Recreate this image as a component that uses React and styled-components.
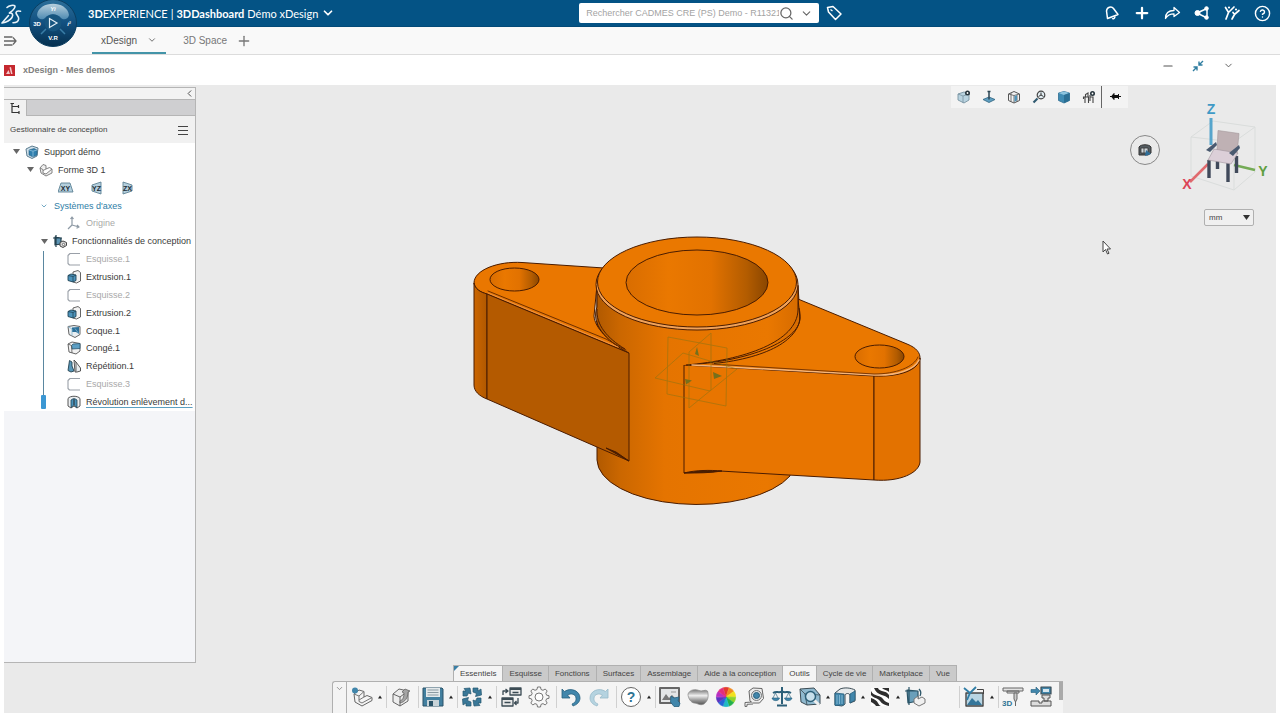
import { useState } from 'react'
import styled, { createGlobalStyle } from 'styled-components'
import { ChevronDown, ChevronLeft, CircleHelp, Minus, Plus, Search } from 'lucide-react'

const GlobalStyle = createGlobalStyle`
  * {
    box-sizing: border-box;
  }
  body {
    margin: 0;
    background: #fff;
    color: #444;
    font-family: "Liberation Sans", Arial, sans-serif;
    font-size: 9px;
  }
  button, input, select {
    font-family: inherit;
    color: inherit;
  }
  svg {
    display: block;
    flex: none;
  }
`

const Page = styled.div`
  display: flex;
  flex-direction: column;
  min-height: 100vh;
`
const IconButton = styled.button`
  display: flex;
  align-items: center;
  justify-content: center;
  padding: 0;
  border: none;
  background: none;
  cursor: pointer;
`

/* ---- top bar ---- */
const TopBar = styled.header`
  display: flex;
  align-items: center;
  height: 27px;
  background: #045385;
  border-bottom: 1px solid #034a78;
  color: #fff;
`
const Brand = styled.div`
  display: flex;
  align-items: center;
  flex: 1;
`
const CompassSlot = styled.div`
  position: relative;
  width: 50px;
  height: 26px;
  margin: 0 10px 0 6px;
`
const CompassButton = styled(IconButton)`
  position: absolute;
  top: -2px;
  left: 0;
  z-index: 2;
  border-radius: 50%;
`
const BrandTitle = styled.h1`
  display: flex;
  align-items: center;
  gap: 3px;
  margin: 0;
  font-family: Lato, sans-serif;
  font-size: 11px;
  font-weight: 400;
  white-space: nowrap;
`
const SearchBox = styled.form`
  display: flex;
  align-items: center;
  width: 240px;
  height: 20px;
  padding-right: 6px;
  border-radius: 2px;
  background: #fff;
  color: #666;
`
const SearchInput = styled.input`
  flex: 1;
  min-width: 0;
  height: 20px;
  margin-left: 7px;
  padding: 0;
  border: none;
  outline: none;
  background: none;
  font-size: 9px;
  &::placeholder {
    color: #a3a3a3;
    opacity: 1;
  }
`
const SearchTools = styled.div`
  display: flex;
  gap: 6px;
`
const TopActions = styled.nav`
  display: flex;
  flex: 0 1 36%;
  align-items: center;
  justify-content: flex-end;
  gap: 10px;
  padding-right: 8px;
`
const TopAction = styled(IconButton)`
  width: 20px;
  height: 20px;
  &:first-child {
    margin: 0 auto 0 5px;
  }
`

/* ---- dashboard tabs ---- */
const TabBar = styled.nav`
  display: flex;
  align-items: stretch;
  height: 28px;
  border-bottom: 1px solid #dcdcdc;
  background: #f9f9f9;
  color: #777;
`
const MenuToggle = styled(IconButton)`
  width: 20px;
  margin-right: 72px;
`
const DashTab = styled.button`
  display: flex;
  align-items: center;
  gap: 10px;
  margin-right: 8px;
  padding: 1px 9px 0;
  border: none;
  border-bottom: 2px solid ${(props) => (props.$active ? '#4394a8' : 'transparent')};
  background: none;
  font-size: 10px;
  color: ${(props) => (props.$active ? '#555' : '#777')};
  cursor: pointer;
  & + & {
    margin-right: 0;
  }
`

/* ---- app title ---- */
const AppHeader = styled.div`
  display: flex;
  align-items: center;
  height: 30px;
  padding: 0 42px 0 4px;
`
const AppTitle = styled.h2`
  flex: 1;
  margin: 0;
  padding-left: 8px;
  font-size: 9px;
  font-weight: 700;
  color: #808080;
`
const WindowTools = styled.div`
  display: flex;
  gap: 10px;
  padding-bottom: 9px;
  color: #555;
`
const WindowTool = styled(IconButton)`
  width: 20px;
  height: 14px;
`

/* ---- workspace ---- */
const Workspace = styled.main`
  display: flex;
  flex-direction: column;
  flex: 1;
  margin: 0 4px 7px;
  background: #eaeaea;
`
const Body = styled.div`
  display: flex;
  flex: 1;
`
const Sidebar = styled.aside`
  display: flex;
  flex-direction: column;
  width: 192px;
  margin-top: 2px;
  border: 1px solid #b5b5b5;
  border-left: none;
  background: #f4f5f8;
`
const CollapseStrip = styled.div`
  display: flex;
  justify-content: flex-end;
  height: 11px;
  background: #f3f3f3;
`
const PanelTabs = styled.div`
  display: flex;
  height: 17px;
  border-top: 1px solid #b5b5b5;
  border-bottom: 1px solid #b5b5b5;
  background: #cfcfd1;
`
const PanelTab = styled(IconButton)`
  width: 23px;
  height: 16px;
  border-right: 1px solid #b5b5b5;
  background: #f1f1f1;
`
const PanelHeader = styled.div`
  display: flex;
  align-items: center;
  justify-content: space-between;
  height: 27px;
  padding: 0 6px;
  background: #f1f1f1;
  font-size: 8px;
`
const Tree = styled.ul`
  position: relative;
  display: flex;
  flex-direction: column;
  height: 268px;
  margin: 0;
  padding: 0;
  list-style: none;
  background: #fff;
`
const TreeRow = styled.li`
  display: flex;
  flex: 1;
  align-items: center;
  gap: 4px;
  padding-left: ${(props) => 7 + props.$depth * 14}px;
  color: ${(props) => props.$color || '#3a3a3a'};
  white-space: nowrap;
`
const Caret = styled.span`
  display: flex;
  justify-content: center;
  width: 10px;
`
const TreeLabel = styled.span`
  padding-left: 1px;
  text-decoration: ${(props) => (props.$current ? 'underline #5b9fc0' : 'none')};
  text-underline-offset: 2px;
`
const PlaneList = styled.span`
  display: flex;
  gap: 15px;
  padding-left: 5px;
`
const RollbackBar = styled.li`
  position: absolute;
  top: 108px;
  bottom: 2px;
  left: 37px;
  display: flex;
  flex-direction: column;
  align-items: center;
  width: 5px;
  &::before {
    content: '';
    flex: 1;
    width: 1px;
    background: #5a87a0;
  }
  &::after {
    content: '';
    width: 5px;
    height: 14px;
    border-radius: 1px;
    background: #3b97d3;
  }
`

/* ---- 3D view ---- */
const Viewport = styled.section`
  position: relative;
  flex: 1;
  min-width: 0;
`
const Scene = styled.svg`
  position: absolute;
  inset: 0;
  width: 100%;
  height: 100%;
`
const ViewTools = styled.div`
  position: absolute;
  top: 1px;
  right: 148px;
  display: flex;
  align-items: center;
  height: 22px;
  background: #f3f3f3;
`
const ViewTool = styled(IconButton)`
  width: ${(props) => (props.$pin ? 27 : 25)}px;
  height: 22px;
  border-left: ${(props) => (props.$pin ? '1px solid #666' : 'none')};
`
const RotateButton = styled(IconButton)`
  position: absolute;
  top: 50px;
  right: 116px;
  width: 30px;
  height: 30px;
  border: 1px solid #888;
  border-radius: 50%;
`
const AxisCube = styled.svg`
  position: absolute;
  top: 13px;
  right: 4px;
`
const UnitPicker = styled.div`
  position: absolute;
  top: 124px;
  right: 22px;
  display: flex;
  align-items: center;
  svg {
    position: absolute;
    right: 4px;
    pointer-events: none;
  }
`
const UnitSelect = styled.select`
  width: 50px;
  height: 17px;
  padding: 0 4px;
  border: 1px solid #b0b0b0;
  border-radius: 2px;
  background: #f0f0f0;
  font-size: 8px;
  appearance: none;
`
const Pointer = styled.svg`
  position: absolute;
  top: 155px;
  right: 164px;
`

/* ---- action bar ---- */
const Dock = styled.footer`
  display: flex;
  flex-direction: column;
  width: 100%;
  max-width: 731px;
  margin: 2px 0 0 328px;
`
const DockTabs = styled.div`
  display: flex;
  height: 16px;
  padding-left: 121px;
`
const DockTab = styled.button`
  position: relative;
  padding: 0 6px;
  border: 1px solid #b0b0b0;
  border-width: 1px 1px 0 ${(props) => (props.$corner ? '1px' : 0)};
  background: ${(props) => (props.$active ? '#f4f4f4' : '#cacaca')};
  font-size: 8px;
  white-space: nowrap;
  cursor: pointer;
  &::before {
    content: '';
    display: ${(props) => (props.$corner ? 'block' : 'none')};
    position: absolute;
    top: 0;
    left: 0;
    border-top: 5px solid #3a7fa5;
    border-right: 5px solid transparent;
  }
`
const Toolbar = styled.div`
  display: flex;
  height: 32px;
  border: 1px solid #b0b0b0;
  border-bottom: none;
  border-right: none;
  border-top-left-radius: 3px;
  background: #f4f4f4;
`
const ToolbarToggle = styled(IconButton)`
  align-items: flex-start;
  width: 14px;
  padding-top: 2px;
  border-right: 1px solid #b0b0b0;
  color: #777;
`
const ToolGroups = styled.div`
  display: flex;
  flex: 1;
  padding: 4px 4px 5px 1px;
`
const ToolGroup = styled.div`
  display: flex;
  flex: ${(props) => (props.$grow ? 1 : 'none')};
  padding-right: ${(props) => (props.$last ? 0 : 3)}px;
  border-right: ${(props) => (props.$last ? 'none' : '1px solid #d0d0d0')};
`
const ToolButton = styled(IconButton)`
  width: 28px;
`
const MoreButton = styled(IconButton)`
  width: 7px;
`
const ScrollThumb = styled.div`
  width: 4px;
  height: 18px;
  background: #aaa;
`

/* ---- small glyphs ---- */
const Logo = () => (
  <svg width="22" height="24" viewBox="0 0 22 24" fill="none" stroke="#e9f3f9" strokeWidth="1.600" strokeLinecap="round" strokeLinejoin="round">
    <path d="M7 6.500C9 4.500 13.500 3.500 15 5C15.500 7.500 12 10 9.500 12" />
    <path d="M9.500 12C12.500 11.800 13.500 13.500 12 16.500C10 19.500 6 21.300 2 22L8.500 14.500" />
    <path d="M20.500 10.300C18.500 9.800 16.500 10 16 11.500C15.700 13.500 19 15 18.700 17.800C18.300 20.500 15.500 21.700 13 21.700" />
  </svg>
)

const Compass = () => (
  <svg width="50" height="50" viewBox="0 0 50 50">
    <defs>
      <linearGradient id="ball" x1="0" y1="0" x2="0" y2="1">
        <stop offset="0" stopColor="#2c6f9a" />
        <stop offset=".5" stopColor="#125080" />
        <stop offset="1" stopColor="#06304f" />
      </linearGradient>
      <linearGradient id="cap" x1="0" y1="0" x2="0" y2="1">
        <stop offset="0" stopColor="#b7cfdd" />
        <stop offset="1" stopColor="#4f8bb2" />
      </linearGradient>
    </defs>
    <circle cx="25" cy="25" r="23.500" fill="url(#ball)" stroke="#0b3e61" />
    <path d="M9 17C11 2 39 2 41 17C40 22 35 22 33 20C29 15 21 15 17 20C15 22 10 22 9 17Z" fill="url(#cap)" />
    <circle cx="25" cy="25" r="8.500" fill="#17557f" />
    <path d="M13 36l5-5M37 36l-5-5" stroke="#3a7da6" strokeWidth="1.500" />
    <path d="M21.500 20.500v9l7.500-4.500z" fill="none" stroke="#e4eff6" strokeWidth="1.200" />
    <g fill="#fff" fontFamily="Liberation Sans, sans-serif" fontSize="6" fontWeight="700" textAnchor="middle">
      <text x="9" y="28">3D</text>
      <text x="25" y="13" fontStyle="italic">Yi</text>
      <text x="41" y="28" fontStyle="italic">i²</text>
      <text x="25" y="42">V.R</text>
    </g>
  </svg>
)

const TagIcon = () => (
  <svg width="16" height="16" viewBox="0 0 16 16" fill="none" stroke="#fff" strokeWidth="1.500" strokeLinejoin="round">
    <path d="M1.500 2.500L7 1.500L15 9L9.500 14.500L2.500 7Z" />
    <path d="M4.500 4.500l2 1.500" strokeWidth="1.300" />
  </svg>
)
const BellIcon = () => (
  <svg width="16" height="16" viewBox="0 0 16 16" fill="none" stroke="#fff" strokeWidth="1.500" strokeLinejoin="round">
    <path d="M3.500 13.500L2.500 6C3 2 7.500 1 9.500 3.500L14 9.500Z" />
    <path d="M8 13.500c1.500 1 3.200-.5 2.800-2.200" />
  </svg>
)
const ForwardIcon = () => (
  <svg width="17" height="16" viewBox="0 0 17 16" fill="none" stroke="#fff" strokeWidth="1.300" strokeLinejoin="round">
    <path d="M1.500 13.500C1.500 8 5 5.500 10 5.500V2.500L15.500 7.500L10 11.500V8.800C6.500 8.800 3.500 10 1.500 13.500Z" />
  </svg>
)
const ShareIcon = () => (
  <svg width="16" height="16" viewBox="0 0 16 16" fill="#fff" stroke="#fff">
    <path d="M3 8L13 3.500V13Z" fill="none" strokeWidth="1.500" />
    <circle cx="3.500" cy="8" r="2.500" />
    <circle cx="12.500" cy="3.500" r="1.800" />
    <circle cx="12.500" cy="12.500" r="1.800" />
  </svg>
)
const PeopleIcon = () => (
  <svg width="18" height="16" viewBox="0 0 18 16" fill="none" stroke="#fff" strokeWidth="1.700" strokeLinecap="round">
    <path d="M2.500 2.500l3 5L11 2M5.500 7.500L3 14M10 7.500l1.500 2L16 5.500M11.500 9.500L9 14" />
    <circle cx="6" cy="2.500" r="1.100" fill="#fff" stroke="none" />
    <circle cx="13" cy="4.500" r="1.100" fill="#fff" stroke="none" />
  </svg>
)
const MenuIcon = () => (
  <svg width="14" height="12" viewBox="0 0 14 12" fill="none" stroke="#666" strokeWidth="1.300">
    <path d="M1 2h8.500M1 6h12M1 10h8.500M10 2.500L13 6l-3 3.500" />
  </svg>
)
const AppLogo = () => (
  <svg width="11" height="11" viewBox="0 0 11 11">
    <path d="M0 0h11v11H0z" fill="#c5282f" />
    <path d="M2 9l2.500-4L6 9zM5.500 2.500L7 2l1.500 7H7z" fill="#f4c9ca" />
  </svg>
)
const ShrinkIcon = () => (
  <svg width="12" height="12" viewBox="0 0 12 12" fill="none" stroke="#2f7da0" strokeWidth="1.400">
    <path d="M11 1L7.500 4.500M7 1.500V5h3.500M1 11l3.500-3.500M1.500 7H5v3.500" />
  </svg>
)
const TreeIcon = () => (
  <svg width="12" height="12" viewBox="0 0 12 12" fill="none" stroke="#333" strokeWidth="1.200">
    <path d="M3 1v9.500h7M3 4.500h6M1.500 1.500H5M9.500 3v3M10 9v3" />
  </svg>
)
const Triangle = ({ size = 7, color = '#333' }) => (
  <svg width={size} height={size} viewBox="0 0 7 7">
    <path d="M0 1h7L3.500 6z" fill={color} />
  </svg>
)

/* ---- tree icons ---- */
const treeIcons = {
  product: (
    <>
      <path d="M1 4l6-3 6 2-1 8-5 2.500L2 11z" fill="#cfe0ea" stroke="#5d7d90" />
      <path d="M4 5l5-1.500L12 5v5l-4 2-4-2z" fill="#2f7fae" stroke="#275e80" strokeWidth=".6" />
      <path d="M4 5l4 1.200L12 5M8 6.200V12" fill="none" stroke="#9cc9e2" strokeWidth=".7" />
    </>
  ),
  shape: (
    <path d="M1 5l3-3.500 3 1V6l3.500-1.500L13 6v4l-6 3-5-3zM1 5l3 1.500V10l3 1 6-5M7 6L4 7.500" fill="#eee" stroke="#777" strokeWidth=".9" />
  ),
  origin: <path d="M5 1v8l7 2M5 9l-4 4M3.500 3L5 1l1.500 2M10 9l2 2-2.500 1.200" fill="none" stroke="#8e9aa5" strokeWidth="1.200" />,
  features: (
    <>
      <path d="M3 1v12M0 4h9M2 3l6 1v6l-6 1z" fill="#5c94b4" stroke="#24414f" strokeWidth="1.200" />
      <path d="M7 8.500l3-1.500 3.500 1.500v3L10 13.500 7 12z" fill="#ddd" stroke="#444" />
      <circle cx="10.500" cy="10.500" r="1.200" fill="#fff" stroke="#444" strokeWidth=".7" />
    </>
  ),
  sketch: <path d="M13 1.500H3L1 3.500v8l1.500 1.500H13" fill="none" stroke="#9aa0a8" strokeWidth="1.100" />,
  extrude: (
    <>
      <path d="M6 2l5-1.500 2.500 2V11l-4 2-3.500-1z" fill="#f2f2f2" stroke="#555" strokeWidth=".9" />
      <path d="M1 5.500L4 4l5 1v5.500L6 12l-5-1.500z" fill="#4c93bb" stroke="#1f4457" strokeWidth=".9" />
      <path d="M1 5.500L6 6.500 9 5M6 6.500V12" fill="none" stroke="#1f4457" strokeWidth=".8" />
    </>
  ),
  shell: (
    <>
      <path d="M1 2.500l6-1 6 1v8l-5 3-6-3z" fill="#e9eef1" stroke="#555" strokeWidth=".9" />
      <path d="M5 3.500l7-.5v7L9 8H5z" fill="#2c7099" />
      <path d="M1 2.500l4 2.500v6.500M8 4.500l4 5.500" fill="none" stroke="#7fb3cf" strokeWidth=".8" />
    </>
  ),
  fillet: (
    <>
      <path d="M1 3l4-2 8 1.500V10l-4 3-7-2z" fill="#f2f2f2" stroke="#555" strokeWidth=".9" />
      <path d="M4.500 4.500L6 3l7-.5v5L5 8z" fill="#5d9fc4" stroke="#28566e" strokeWidth=".8" />
      <path d="M1 3l3.500 1.500L5 12" fill="none" stroke="#555" strokeWidth=".8" />
    </>
  ),
  pattern: (
    <>
      <path d="M1 11.500L2.500 1.500 5 3v4l2 5-3 1z" fill="#5797b9" stroke="#23414f" strokeWidth=".9" />
      <path d="M7 1l2 2 4.500 6v3L10 13H8z" fill="#e9eef1" stroke="#444" strokeWidth=".9" />
      <path d="M9 3v9.500" stroke="#444" strokeWidth=".8" />
    </>
  ),
  revolve: (
    <>
      <path d="M1 3.500C3 .5 11 .5 13 3.500V11l-3 2-3-2-3 2-3-2z" fill="#eceff1" stroke="#444" strokeWidth=".9" />
      <path d="M4 5l2.500-1.500v7L4 12.500zM10 5L7.500 3.500v7L10 12.500z" fill="#4a93bb" stroke="#1f4457" strokeWidth=".8" />
    </>
  ),
}
const TreeGlyph = ({ name }) => (
  <svg width="14" height="14" viewBox="0 0 14 14" strokeLinejoin="round">
    {treeIcons[name]}
  </svg>
)

const planes = [
  { label: 'XY', d: 'M3 2h9l3 9H0z' },
  { label: 'YZ', d: 'M3 4l9-3v12l-9-3z' },
  { label: 'ZX', d: 'M3 1l9 3v6l-9 3z' },
]
const PlaneIcon = ({ label, d }) => (
  <svg width="16" height="14" viewBox="0 0 16 14" role="img" aria-label={label}>
    <path d={d} fill="#b4cfdd" stroke="#5f8294" strokeWidth=".9" />
    <text x="7.500" y="9.500" textAnchor="middle" fontFamily="Liberation Sans, sans-serif" fontSize="7" fontWeight="700" fill="#1c2c36">
      {label}
    </text>
  </svg>
)

const tree = [
  { depth: 0, caret: true, icon: 'product', label: 'Support démo' },
  { depth: 1, caret: true, icon: 'shape', label: 'Forme 3D 1' },
  { depth: 3, planes: true },
  { depth: 2, chevron: true, label: "Systèmes d'axes", color: '#2e7da6' },
  { depth: 3, icon: 'origin', label: 'Origine', color: '#a9a9a9' },
  { depth: 2, caret: true, icon: 'features', label: 'Fonctionnalités de conception' },
  { depth: 3, icon: 'sketch', label: 'Esquisse.1', color: '#a9a9a9' },
  { depth: 3, icon: 'extrude', label: 'Extrusion.1' },
  { depth: 3, icon: 'sketch', label: 'Esquisse.2', color: '#a9a9a9' },
  { depth: 3, icon: 'extrude', label: 'Extrusion.2' },
  { depth: 3, icon: 'shell', label: 'Coque.1' },
  { depth: 3, icon: 'fillet', label: 'Congé.1' },
  { depth: 3, icon: 'pattern', label: 'Répétition.1' },
  { depth: 3, icon: 'sketch', label: 'Esquisse.3', color: '#a9a9a9' },
  { depth: 3, icon: 'revolve', label: 'Révolution enlèvement d...', current: true },
]

/* ---- view tool icons ---- */
const viewIcons = {
  'Style de vue': (
    <>
      <path d="M1 4l6-2 5 2v6l-5 3-6-3z" fill="#b9d3e0" stroke="#7893a1" strokeWidth=".9" />
      <path d="M1 4l5 2 6-2M6 6v7" fill="none" stroke="#7893a1" strokeWidth=".8" />
      <circle cx="10.500" cy="3" r="2.500" fill="#26343c" />
      <circle cx="10.500" cy="3" r=".9" fill="#fff" />
    </>
  ),
  'Vue normale': (
    <>
      <path d="M1 9.500L7 7l6 2.500L7 12.500z" fill="#5f9fc1" stroke="#2d627d" strokeWidth=".8" />
      <path d="M7 9.500V1M5.500 1.500h3" fill="none" stroke="#2c4653" strokeWidth="1.500" />
    </>
  ),
  Orientation: (
    <>
      <path d="M1.500 4L7 1.500 12.500 4v6.500L7 13l-5.500-2.500z" fill="#f3f3f3" stroke="#555" />
      <path d="M1.500 4L7 5.500 12.500 4M7 5.500V13M4 3v8.500M10 5v7" fill="none" stroke="#666" strokeWidth=".9" />
      <path d="M7.500 6l2.500-.7v5L7.500 12z" fill="#4f93b8" />
    </>
  ),
  Zoom: (
    <>
      <path d="M1.500 12.500l4-4" stroke="#2f5a70" strokeWidth="2.200" />
      <circle cx="9" cy="5" r="3.800" fill="#e3eef3" stroke="#444" strokeWidth="1.200" />
      <path d="M6.500 6.500L9 5l2.500 1.500M9 5V2.500" fill="none" stroke="#333" />
    </>
  ),
  Ombrage: (
    <>
      <path d="M1.500 3L7 1.500 12.500 3v7.500L7 13l-5.500-2.500z" fill="#3f8bb3" stroke="#2f6d90" strokeWidth=".8" />
      <path d="M1.500 3L7 1.500 12.500 3 7 5z" fill="#8cc4df" />
      <path d="M7 5l5.500-2v7.500L7 13z" fill="#2b6f94" />
    </>
  ),
  Ambiance: (
    <>
      <path d="M1.500 9V7h5v6M3 7V13M3.500 7V4.500L6 3v4M8 5v6M8 7h3v6" fill="none" stroke="#444" strokeWidth="1.100" />
      <circle cx="10.500" cy="3.500" r="2.500" fill="#26343c" />
      <circle cx="10.500" cy="3.500" r=".9" fill="#fff" />
    </>
  ),
  'Épingler': <path d="M2 6.500h11M6 3.500v6L3.500 6.500zM6 5.500h4v2H6zM10.500 4v5" fill="#111" stroke="#111" />,
}

/* ---- action bar icons ---- */
const dark = '#3b4b54'
const blue = '#4186ab'
const toolIcons = {
  'Nouvelle pièce': (
    <>
      <path d="M3 8l5-4 5 1.500V11l3-1.500 5 2v3l-10 5.500-7-4z" fill="#f4f4f4" stroke="#666" />
      <path d="M3 8l5 2v5.500l3 1.500 10-5.500M8 14l5-3M8 10l5-4.500" fill="none" stroke="#777" />
      <circle cx="4" cy="4.500" r="3" fill={blue} />
    </>
  ),
  Ouvrir: (
    <>
      <path d="M3 8l6-5 9 2v10l-8 5-7-4z" fill="#ededed" stroke="#666" />
      <path d="M3 8l7 3v9M10 11l4-3" fill="none" stroke="#666" />
      <path d="M10 15c3-1 4-4 4-8l-2-1 3-3 5 2-2 1c0 6-3 10-8 11z" fill="#a5a5a5" stroke="#5a5a5a" strokeWidth=".7" />
    </>
  ),
  Enregistrer: (
    <>
      <path d="M1 2h19l1 1v17H1z" fill="#427f9f" stroke="#2a5368" />
      <path d="M4 2h14v9H4z" fill="#e4e9eb" />
      <path d="M5.500 4h11M5.500 6.500h11M5.500 9h11" stroke="#8b9aa2" />
      <path d="M5 14h12v6H5z" fill="#c8d3d8" />
      <path d="M7 15h4v5H7z" fill="#2a5368" />
    </>
  ),
  'Mettre à jour': (
    <g fill="#3a7898" stroke="#24566f" strokeWidth=".7">
      <path d="M2 10V5h3L3 2.500 9 2l1 6-2.500-1L6 10z" />
      <path d="M12 2h5v3l3-2 .5 6-6 1.500 1-3L12 6z" />
      <path d="M20 12v5h-3l2 2.500-6 .5-1-6 2.500 1L16 12z" />
      <path d="M10 20H5v-3l-3 2-.5-6 6-1.500-1 3L10 16z" />
    </g>
  ),
  Remplacer: (
    <>
      <path d="M10 2h11v7H10zM2 12h11v8H2z" fill="#e8e8e8" stroke={dark} strokeWidth="1.300" />
      <path d="M10 3h11M2 13h11" stroke={dark} strokeWidth="2" />
      <path d="M12.500 6.500h6M4.500 16.500h6" stroke={dark} strokeWidth="1.300" />
      <path d="M3 9V5h4M5.500 3L8 5 5.500 7M18 12v5h-3M16.500 15L14.500 17l2 2" fill="none" stroke={dark} strokeWidth="1.300" />
    </>
  ),
  Options: (
    <>
      <path d="M9.500 1h3l.5 2.500 2 .8L17.200 3l2 2-1.400 2.200.8 2 2.400.5v2.600l-2.400.5-.8 2 1.400 2.200-2 2-2.200-1.400-2 .8-.5 2.600h-3L9 18.400l-2-.8L4.800 19l-2-2 1.400-2.200-.8-2L1 12.300V9.700l2.400-.5.8-2L2.800 5l2-2L7 4.300l2-.8z" fill="#f7f7f7" stroke="#777" />
      <circle cx="11" cy="11" r="4" fill="#fff" stroke="#777" />
    </>
  ),
  Annuler: (
    <path d="M2 3l2.500 2.500C11 1 20 5 20 12c0 3.500-2.500 6.500-7 8l-1-2c3.500-1.500 4.200-3.500 4-6-.4-4-5-5-8.500-3L10 12H2z" fill={blue} stroke="#275f7d" strokeWidth=".8" />
  ),
  'Rétablir': (
    <path d="M20 3l-2.500 2.500C11 1 2 5 2 12c0 3.500 2.500 6.500 7 8l1-2c-3.500-1.500-4.200-3.500-4-6 .4-4 5-5 8.500-3L12 12h8z" fill="#b5d3e0" stroke="#98bac9" strokeWidth=".8" />
  ),
  Aide: (
    <>
      <circle cx="11" cy="11" r="9.500" fill="#fff" stroke="#666" />
      <text x="11" y="16" textAnchor="middle" fontFamily="Liberation Sans, sans-serif" fontSize="14" fontWeight="700" fill="#2f7393">?</text>
    </>
  ),
  Capture: (
    <>
      <path d="M1 2h19v15H1z" fill="#e3e5e6" stroke="#666" strokeWidth="2" />
      <path d="M3 14l4-6 3 4 3-3 5 5z" fill="#777" />
      <path d="M12 6h5" stroke="#999" />
      <path d="M12 10l3 2 5-1-1 4 2 2-1 3.500h-5L11.500 16z" fill={blue} stroke="#275f7d" strokeWidth=".8" />
    </>
  ),
  Apparence: <path d="M1 8c2-5 8-5 11-3.500C15 6 18 3 20.500 5c1.500 5 .5 10-3.500 13-4 2-7-1-10-1-3-.5-6-4.500-6-9z" fill="url(#metal)" stroke="#888" strokeWidth=".7" />,
  Couleurs: (
    <>
      {['#e23b2e', '#f08a1d', '#f3e11d', '#8fd32a', '#22b04c', '#1fb9c4', '#2466d6', '#5b35c0', '#b92fc0', '#e22c7d'].map((color, i) => (
        <path key={color} d="M11 11L8.200 1.800A9.600 9.600 0 0 1 13.800 1.800Z" fill={color} stroke={color} strokeWidth=".6" transform={`rotate(${i * 36} 11 11)`} />
      ))}
    </>
  ),
  Mesurer: (
    <>
      <path d="M6 5l4-3 9 .5 1.500 10-4 4.500H9l-2-2z" fill="#ededed" stroke="#666" />
      <circle cx="13.500" cy="9.500" r="5" fill="#dfe5e8" stroke="#777" />
      <circle cx="13.500" cy="9.500" r="3" fill={blue} stroke="#275f7d" />
      <path d="M9 16l-7 .5v4l2-.2v-2l6-.3" fill="#f7f7f7" stroke="#666" />
    </>
  ),
  Masse: (
    <>
      <path d="M11 1v17M2 7c4-2.500 5 .5 9-1.500 4 2 5-1 9 1.500M6 19.500h10" fill="none" stroke="#2c5f78" strokeWidth="2" />
      <path d="M4.500 7l-3 6M4.500 7l3 6M17.500 7l-3 6M17.500 7l3 6" stroke="#4d7b91" strokeWidth=".8" />
      <path d="M1 12h7.500c-.5 3.500-7 3.500-7.500 0zM13.500 12H21c-.5 3.500-7 3.500-7.500 0z" fill={blue} stroke="#275f7d" strokeWidth=".6" />
    </>
  ),
  Interroger: (
    <>
      <path d="M1 3l14-1 6 7v9l-13 1-6-3z" fill="#8fb9cf" stroke={dark} />
      <path d="M1 3l5 5 15 1M6 8l2 11" fill="none" stroke={dark} strokeWidth=".8" />
      <path d="M15 14l5 5" stroke="#eee" strokeWidth="3" />
      <circle cx="11.500" cy="10.500" r="5" fill="#c7dfeb" stroke="#2c5f78" strokeWidth="1.500" />
    </>
  ),
  Section: (
    <>
      <path d="M1 7l5-4c5-2 11-1 15 1v11l-5 2V9c-1-2-4-2-5 0v9l-3 2-7-1z" fill="#e5e9eb" stroke={dark} />
      <path d="M1 7l9 1v11l-9 .5zM16 8l5-3v9l-5 3z" fill={blue} stroke="#275f7d" strokeWidth=".8" />
      <path d="M3 9v9M5.500 9v9M8 9v9" stroke="#9ccbe2" strokeWidth=".7" />
    </>
  ),
  'Zébrures': (
    <>
      <path d="M2 2h18v18H2z" fill="#fff" />
      <path d="M2 2h7c1 4 8 2 11 7v4C16 8 8 10 5 2zM2 5c3 6 10 4 12 8 2 3 4 3 6 4v3c-4-1-7-2-9-5C9 12 4 12 2 9zM2 12c4 1 6 3 7 5s2 3 3 3H7c-1-2-3-3-5-4zM13 2h7v4c-2-2-5-2-7-4z" fill="#2e2e2e" />
    </>
  ),
  'Esquisse 3D': (
    <>
      <path d="M5 1v18M1 5h13M3 4l11 1v10L4 17z" fill="#6a9fba" stroke="#2b5568" strokeWidth="1.200" />
      <path d="M15 3c2 2 2 5 1 7" fill="none" stroke="#2b5568" strokeWidth="1.300" />
      <path d="M10 13l4-3v3l4-2 3 2v4l-6 3-5-3z" fill="#f0f0f0" stroke="#777" />
    </>
  ),
  Rendu: (
    <>
      <path d="M3 7h17v13H3z" fill="#b9d5e3" stroke="#444" strokeWidth="1.400" />
      <path d="M4 19l5-7 4 4 2-2 4 5z" fill="#35769a" />
      <path d="M1 2l6 5L13 1M7 7l-3 7" fill="none" stroke="#2f7da6" strokeWidth="1.800" />
      <path d="M14 3.500h6.500V8" fill="none" stroke="#444" />
    </>
  ),
  'Impression 3D': (
    <>
      <path d="M1 2h20v3H1zM5 5h12v2H5z" fill="#e3e3e3" stroke="#666" />
      <path d="M12 7h3v6l-1.500 3L12 13z" fill="#ccc" stroke="#666" />
      <path d="M13.500 16v4" stroke="#666" />
      <text x="0" y="20" fontFamily="Liberation Sans, sans-serif" fontSize="8" fontWeight="700" fill="#2f7393">3D</text>
    </>
  ),
  Usinage: (
    <>
      <path d="M1 3.500h5V1l4 4-4 4V6.500H1z" fill={blue} stroke="#275f7d" strokeWidth=".6" />
      <path d="M11 1h10v7H11z" fill={blue} stroke={dark} strokeWidth="1.200" />
      <path d="M13 3h6v3h-6z" fill="#d7e6ee" />
      <path d="M12 9h8v3h-2v3h-4v-3h-2zM1 15h8v2h3v-2h9v5H1z" fill="#ddd" stroke="#555" />
    </>
  ),
}

const toolGroups = [
  [['Nouvelle pièce', true]],
  [['Ouvrir']],
  [['Enregistrer', true]],
  [['Mettre à jour', true]],
  [['Remplacer'], ['Options']],
  [['Annuler'], ['Rétablir']],
  [['Aide', true]],
  [['Capture'], ['Apparence'], ['Couleurs'], ['Mesurer'], ['Masse'], ['Interroger', true], ['Section', true], ['Zébrures', true], ['Esquisse 3D']],
  [['Rendu', true]],
  [['Impression 3D'], ['Usinage']],
]

const dockTabs = [
  'Essentiels',
  'Esquisse',
  'Fonctions',
  'Surfaces',
  'Assemblage',
  'Aide à la conception',
  'Outils',
  'Cycle de vie',
  'Marketplace',
  'Vue',
]

const BracketModel = () => (
  <Scene viewBox="196 85 1080 578" role="img" aria-label="Support démo">
    <defs>
      <linearGradient id="body" gradientUnits="userSpaceOnUse" x1="596" y1="0" x2="798" y2="0">
        <stop offset="0" stopColor="#b05900" />
        <stop offset=".12" stopColor="#cb6700" />
        <stop offset=".34" stopColor="#e57400" />
        <stop offset=".85" stopColor="#ea7800" />
        <stop offset="1" stopColor="#d76c00" />
      </linearGradient>
      <linearGradient id="bore" x1="0" y1="0" x2="1" y2="0">
        <stop offset="0" stopColor="#d96d00" />
        <stop offset=".3" stopColor="#ea7800" />
        <stop offset=".6" stopColor="#e27200" />
        <stop offset=".85" stopColor="#b35c00" />
        <stop offset="1" stopColor="#8a4600" />
      </linearGradient>
      <linearGradient id="leftEnd" x1="0" y1="0" x2="1" y2="0">
        <stop offset="0" stopColor="#cc6600" />
        <stop offset="1" stopColor="#b05800" />
      </linearGradient>
    </defs>
    <g stroke="#4a1c00" strokeLinejoin="round">
      {/* central cylinder */}
      <path d="M597 320V460A100 45 0 0 0 790 476L800 318 798 285H597Z" fill="url(#body)" />
      {/* left arm */}
      <path d="M604 268L522 262.500C498 261 474 270 474 283C475 289 480 292 487 294L629 353C607 340 595 328 594 316L597 285Z" fill="#ea7700" />
      <path d="M474 283C475 289 480 292 487 294V399C479 396 474 391 474 385Z" fill="url(#leftEnd)" />
      <path d="M487 294L629 353V461L487 399Z" fill="#b45a00" />
      <path d="M606 448L629 461L616 452Z" fill="#4a2000" />
      {/* right arm */}
      <path d="M798 299L907 344C917 348 920 353 920 358C919 370 900 377 874 376L684 365C750 362 800 340 800 318Z" fill="#ea7800" />
      <path d="M684 365L874 376V480L720 471L684 473Z" fill="#e87500" />
      <path d="M874 376C900 377 919 370 920 358V462C919 473 900 482 874 480Z" fill="#e37200" />
      <path d="M684 473C696 470 710 470 722 471C710 473 698 473 684 473Z" fill="#4a2000" />
      {/* collar */}
      <path d="M597 286V308C594 325 604 340 629 353L684 365C744 360 797 342 798 310V286Z" fill="url(#body)" stroke="none" />
      <path d="M597 286V307C591 323 604 340 629 353M597 309C596 325 607 338 625 349M798 286V310C797 342 744 360 686 365M799 308C807 338 768 358 714 363.500" fill="none" />
      <ellipse cx="697" cy="284.500" rx="101" ry="45.500" fill="#f0a25a" />
      <ellipse cx="697" cy="282" rx="99.500" ry="45" fill="#ea7800" />
      <ellipse cx="697" cy="282.500" rx="71" ry="32.500" fill="url(#bore)" />
      <ellipse cx="514.500" cy="279.500" rx="24.500" ry="11.500" fill="url(#bore)" />
      <ellipse cx="879.500" cy="356.500" rx="24.500" ry="11.500" fill="url(#bore)" />
    </g>
    {/* rounded rim highlights */}
    <g fill="none" strokeLinecap="round">
      <path d="M488 293L618 347" stroke="#e99248" />
      <path d="M488 291L606 339L626 350" stroke="#5e2600" strokeWidth=".9" />
      <path d="M692 365L874 375C898 376 915 369 919 360" stroke="#f5b57b" strokeWidth="1.500" />
      <path d="M712 364L874 374C896 374 914 367 918 357" stroke="#5e2600" strokeWidth=".8" />
    </g>
    {/* reference planes */}
    <g fill="none" stroke="#8c7414" strokeWidth=".8" opacity=".7">
      <path d="M668 337L727 348L726 406L667 394Z" />
      <path d="M655 378L683 353L737 369L710 391Z" />
      <path d="M711 333V390L689 408V352Z" />
    </g>
    <path d="M713 372l9 4-8 3zM685 379l7 1.500-6 4zM697 347l2 9-4-2z" fill="#75701c" />
  </Scene>
)

const AxisTriad = () => (
  <AxisCube width="94" height="94" viewBox="1178 98 94 94" aria-label="Axes">
    <path d="M1191 137L1213 121L1255 127L1234 142ZM1191 137V176L1234 190V142M1255 127V172L1234 190" fill="none" stroke="#dadddc" />
    <path d="M1211 118V145" stroke="#56a5cc" strokeWidth="3" />
    <path d="M1208 164L1190 182" stroke="#e06a6e" strokeWidth="2.500" />
    <path d="M1234 165L1255 170" stroke="#74ab56" strokeWidth="2.500" />
    <path d="M1217.500 160v9M1236.500 156v17M1209 160v18M1228 162v20" stroke="#40495a" strokeWidth="3.400" />
    <path d="M1218 130.500L1239 133.500L1237 154L1217 150Z" fill="#bfb1b4" stroke="#a3979a" strokeWidth=".6" />
    <path d="M1214 149L1238 153L1231 164L1208 160Z" fill="#dccfd8" stroke="#9f949c" strokeWidth=".6" />
    <path d="M1206 150L1216 142L1217 145L1210 152ZM1229 153L1239 145L1240 148L1233 156Z" fill="#4a5a70" />
    <g fontFamily="Liberation Sans, sans-serif" fontSize="14" fontWeight="700" textAnchor="middle">
      <text x="1211" y="114" fill="#3f9ac6">Z</text>
      <text x="1187" y="189" fill="#dc4457">X</text>
      <text x="1263" y="176" fill="#5f9e41">Y</text>
    </g>
  </AxisCube>
)

const App = () => {
  const [dashTab, setDashTab] = useState('xDesign')
  const [dockTab, setDockTab] = useState('Outils')

  return (
    <Page>
      <GlobalStyle />
      <TopBar>
        <Brand>
          <Logo />
          <CompassSlot>
            <CompassButton aria-label="Compas">
              <Compass />
            </CompassButton>
          </CompassSlot>
          <BrandTitle>
            <span><b>3D</b>EXPERIENCE</span>
            <span>|</span>
            <b>3DDashboard</b>
            <span>Démo xDesign</span>
            <ChevronDown size={14} strokeWidth={3} />
          </BrandTitle>
        </Brand>
        <SearchBox onSubmit={(e) => e.preventDefault()}>
          <SearchInput aria-label="Rechercher" placeholder="Rechercher CADMES CRE (PS) Demo - R11321" />
          <SearchTools>
            <IconButton aria-label="Lancer la recherche"><Search size={15} /></IconButton>
            <IconButton type="button" aria-label="Filtres"><ChevronDown size={13} /></IconButton>
          </SearchTools>
        </SearchBox>
        <TopActions>
          <TopAction aria-label="Étiquettes"><TagIcon /></TopAction>
          <TopAction aria-label="Notifications"><BellIcon /></TopAction>
          <TopAction aria-label="Ajouter"><Plus size={18} strokeWidth={3} /></TopAction>
          <TopAction aria-label="Partager"><ForwardIcon /></TopAction>
          <TopAction aria-label="Réseau"><ShareIcon /></TopAction>
          <TopAction aria-label="Communautés"><PeopleIcon /></TopAction>
          <TopAction aria-label="Aide"><CircleHelp size={17} /></TopAction>
        </TopActions>
      </TopBar>

      <TabBar>
        <MenuToggle aria-label="Menu"><MenuIcon /></MenuToggle>
        <DashTab $active={dashTab === 'xDesign'} onClick={() => setDashTab('xDesign')}>
          xDesign
          <ChevronDown size={10} />
        </DashTab>
        <DashTab $active={dashTab === '3D Space'} onClick={() => setDashTab('3D Space')}>3D Space</DashTab>
        <IconButton aria-label="Ajouter un onglet"><Plus size={16} /></IconButton>
      </TabBar>

      <AppHeader>
        <AppLogo />
        <AppTitle>xDesign - Mes demos</AppTitle>
        <WindowTools>
          <WindowTool aria-label="Réduire"><Minus size={14} /></WindowTool>
          <WindowTool aria-label="Restaurer"><ShrinkIcon /></WindowTool>
          <WindowTool aria-label="Plus"><ChevronDown size={11} /></WindowTool>
        </WindowTools>
      </AppHeader>

      <Workspace>
        <Body>
          <Sidebar>
            <CollapseStrip>
              <IconButton aria-label="Masquer le panneau"><ChevronLeft size={11} /></IconButton>
            </CollapseStrip>
            <PanelTabs>
              <PanelTab aria-label="Arbre"><TreeIcon /></PanelTab>
            </PanelTabs>
            <PanelHeader>
              Gestionnaire de conception
              <IconButton aria-label="Options du panneau">
                <svg width="12" height="12" viewBox="0 0 12 12" stroke="#444">
                  <path d="M1 2.500h10M1 6.500h10M1 10.500h10" />
                </svg>
              </IconButton>
            </PanelHeader>
            <Tree>
              {tree.map((row) => (
                <TreeRow key={row.label || 'planes'} $depth={row.depth} $color={row.color}>
                  {row.planes ? (
                    <PlaneList>
                      {planes.map((plane) => <PlaneIcon key={plane.label} {...plane} />)}
                    </PlaneList>
                  ) : (
                    <>
                      <Caret>
                        {row.caret && <Triangle color="#666" />}
                        {row.chevron && <ChevronDown size={8} />}
                      </Caret>
                      {row.icon && <TreeGlyph name={row.icon} />}
                      <TreeLabel $current={row.current}>{row.label}</TreeLabel>
                    </>
                  )}
                </TreeRow>
              ))}
              <RollbackBar aria-hidden="true" />
            </Tree>
          </Sidebar>

          <Viewport>
            <BracketModel />
            <ViewTools>
              {Object.entries(viewIcons).map(([name, icon]) => (
                <ViewTool key={name} aria-label={name} $pin={name === 'Épingler'}>
                  <svg width="14" height="14" viewBox="0 0 14 14">{icon}</svg>
                </ViewTool>
              ))}
            </ViewTools>
            <RotateButton aria-label="Rotation">
              <svg width="14" height="14" viewBox="0 0 14 14">
                <path d="M1 4c2-3 10-3 12 0v6l-3 2H1z" fill="#555d62" stroke="#333" />
                <path d="M3 5h7v5H3zM6 5v5" fill="#cfd6da" stroke="#333" strokeWidth=".8" />
                <path d="M7 13l1-6 5 4z" fill="#2f6f9a" />
              </svg>
            </RotateButton>
            <AxisTriad />
            <UnitPicker>
              <UnitSelect aria-label="Unité" defaultValue="mm">
                <option>mm</option>
                <option>cm</option>
                <option>m</option>
              </UnitSelect>
              <Triangle />
            </UnitPicker>
            <Pointer width="10" height="15" viewBox="0 0 10 15">
              <path d="M1 1v11l2.500-2.500 2 4.500 1.500-.7L5 9h3.500z" fill="#fff" stroke="#444" />
            </Pointer>
          </Viewport>
        </Body>

        <Dock>
          <DockTabs role="tablist">
            {dockTabs.map((name, i) => (
              <DockTab
                key={name}
                role="tab"
                aria-selected={dockTab === name}
                $active={dockTab === name || i === 0}
                $corner={i === 0}
                onClick={() => setDockTab(name)}
              >
                {name}
              </DockTab>
            ))}
          </DockTabs>
          <Toolbar>
            <ToolbarToggle aria-label="Réduire la barre"><ChevronDown size={9} /></ToolbarToggle>
            <ToolGroups>
              {toolGroups.map((group, g) => (
                <ToolGroup key={group[0][0]} $grow={g === 7} $last={g === toolGroups.length - 1}>
                  {group.map(([name, more]) => [
                    <ToolButton key={name} aria-label={name}>
                      <svg width="22" height="22" viewBox="0 0 22 22" strokeLinejoin="round">
                        {name === 'Apparence' && (
                          <defs>
                            <linearGradient id="metal" x1="0" y1="0" x2="0" y2="1">
                              <stop offset="0" stopColor="#777" />
                              <stop offset=".4" stopColor="#eee" />
                              <stop offset=".7" stopColor="#999" />
                              <stop offset="1" stopColor="#555" />
                            </linearGradient>
                          </defs>
                        )}
                        {toolIcons[name]}
                      </svg>
                    </ToolButton>,
                    more && (
                      <MoreButton key={`${name}-more`} aria-label={`${name} : plus`}>
                        <svg width="4" height="4" viewBox="0 0 4 4"><path d="M0 3.500L2 .5l2 3z" fill="#222" /></svg>
                      </MoreButton>
                    ),
                  ])}
                </ToolGroup>
              ))}
            </ToolGroups>
            <ScrollThumb />
          </Toolbar>
        </Dock>
      </Workspace>
    </Page>
  )
}

export default App
